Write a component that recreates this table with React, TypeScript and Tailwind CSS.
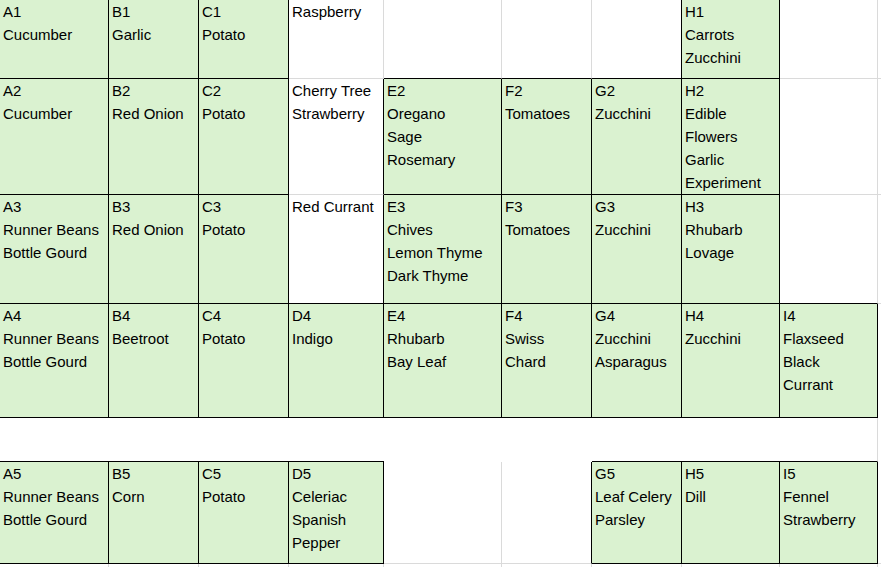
type Line = 'k' | 'g' | 'n';

interface Cell {
  lines?: string[];
  green?: boolean;
  r: Line;
  b: Line;
}

const rightCls: Record<Line, string> = {
  k: 'border-r border-r-black',
  g: 'border-r border-r-[#dadada]',
  n: '',
};

const bottomCls: Record<Line, string> = {
  k: 'border-b border-b-black',
  g: 'border-b border-b-[#dadada]',
  n: '',
};

// one entry per column A..I plus the sliver of J on the right
const rows: Cell[][] = [
  [
    { lines: ['A1', 'Cucumber'], green: true, r: 'k', b: 'k' },
    { lines: ['B1', 'Garlic'], green: true, r: 'k', b: 'k' },
    { lines: ['C1', 'Potato'], green: true, r: 'k', b: 'k' },
    { lines: ['Raspberry'], r: 'g', b: 'g' },
    { r: 'g', b: 'k' },
    { r: 'g', b: 'k' },
    { r: 'k', b: 'k' },
    { lines: ['H1', 'Carrots', 'Zucchini'], green: true, r: 'k', b: 'k' },
    { r: 'g', b: 'g' },
    { r: 'n', b: 'g' },
  ],
  [
    { lines: ['A2', 'Cucumber'], green: true, r: 'k', b: 'k' },
    { lines: ['B2', 'Red Onion'], green: true, r: 'k', b: 'k' },
    { lines: ['C2', 'Potato'], green: true, r: 'k', b: 'k' },
    { lines: ['Cherry Tree', 'Strawberry'], r: 'k', b: 'g' },
    { lines: ['E2', 'Oregano', 'Sage', 'Rosemary'], green: true, r: 'k', b: 'k' },
    { lines: ['F2', 'Tomatoes'], green: true, r: 'k', b: 'k' },
    { lines: ['G2', 'Zucchini'], green: true, r: 'k', b: 'k' },
    { lines: ['H2', 'Edible', 'Flowers', 'Garlic', 'Experiment'], green: true, r: 'k', b: 'k' },
    { r: 'g', b: 'g' },
    { r: 'n', b: 'g' },
  ],
  [
    { lines: ['A3', 'Runner Beans', 'Bottle Gourd'], green: true, r: 'k', b: 'k' },
    { lines: ['B3', 'Red Onion'], green: true, r: 'k', b: 'k' },
    { lines: ['C3', 'Potato'], green: true, r: 'k', b: 'k' },
    { lines: ['Red Currant'], r: 'k', b: 'k' },
    { lines: ['E3', 'Chives', 'Lemon Thyme', 'Dark Thyme'], green: true, r: 'k', b: 'k' },
    { lines: ['F3', 'Tomatoes'], green: true, r: 'k', b: 'k' },
    { lines: ['G3', 'Zucchini'], green: true, r: 'k', b: 'k' },
    { lines: ['H3', 'Rhubarb', 'Lovage'], green: true, r: 'k', b: 'k' },
    { r: 'g', b: 'k' },
    { r: 'n', b: 'g' },
  ],
  [
    { lines: ['A4', 'Runner Beans', 'Bottle Gourd'], green: true, r: 'k', b: 'k' },
    { lines: ['B4', 'Beetroot'], green: true, r: 'k', b: 'k' },
    { lines: ['C4', 'Potato'], green: true, r: 'k', b: 'k' },
    { lines: ['D4', 'Indigo'], green: true, r: 'k', b: 'k' },
    { lines: ['E4', 'Rhubarb', 'Bay Leaf'], green: true, r: 'k', b: 'k' },
    { lines: ['F4', 'Swiss', 'Chard'], green: true, r: 'k', b: 'k' },
    { lines: ['G4', 'Zucchini', 'Asparagus'], green: true, r: 'k', b: 'k' },
    { lines: ['H4', 'Zucchini'], green: true, r: 'k', b: 'k' },
    { lines: ['I4', 'Flaxseed', 'Black', 'Currant'], green: true, r: 'k', b: 'k' },
    { r: 'n', b: 'n' },
  ],
  // spacer row: merged, no inner gridlines
  [
    { r: 'n', b: 'k' },
    { r: 'n', b: 'k' },
    { r: 'n', b: 'k' },
    { r: 'n', b: 'k' },
    { r: 'n', b: 'n' },
    { r: 'n', b: 'n' },
    { r: 'n', b: 'k' },
    { r: 'n', b: 'k' },
    { r: 'g', b: 'k' },
    { r: 'n', b: 'n' },
  ],
  [
    { lines: ['A5', 'Runner Beans', 'Bottle Gourd'], green: true, r: 'k', b: 'k' },
    { lines: ['B5', 'Corn'], green: true, r: 'k', b: 'k' },
    { lines: ['C5', 'Potato'], green: true, r: 'k', b: 'k' },
    { lines: ['D5', 'Celeriac', 'Spanish', 'Pepper'], green: true, r: 'k', b: 'k' },
    { r: 'g', b: 'g' },
    { r: 'k', b: 'g' },
    { lines: ['G5', 'Leaf Celery', 'Parsley'], green: true, r: 'k', b: 'k' },
    { lines: ['H5', 'Dill'], green: true, r: 'k', b: 'k' },
    { lines: ['I5', 'Fennel', 'Strawberry'], green: true, r: 'k', b: 'k' },
    { r: 'n', b: 'g' },
  ],
  [
    { r: 'g', b: 'n' },
    { r: 'g', b: 'n' },
    { r: 'g', b: 'n' },
    { r: 'g', b: 'n' },
    { r: 'g', b: 'n' },
    { r: 'g', b: 'n' },
    { r: 'g', b: 'n' },
    { r: 'g', b: 'n' },
    { r: 'g', b: 'n' },
    { r: 'n', b: 'n' },
  ],
];

export default function App() {
  return (
    <div
      className="w-[881px] h-[567px] overflow-hidden bg-white text-black grid grid-cols-[109px_90px_90px_95px_118px_90px_90px_98px_98px_3px] grid-rows-[79px_116px_109px_114px_44px_102px_3px] text-[15px] leading-[23px]"
      style={{ fontFamily: '"Liberation Sans", Arial, sans-serif' }}
    >
      {rows.flatMap((row, ri) =>
        row.map((cell, ci) => (
          <div
            key={`${ri}-${ci}`}
            className={`pl-[3px] overflow-hidden whitespace-nowrap ${cell.green ? 'bg-[#daf2d0]' : 'bg-white'} ${rightCls[cell.r]} ${bottomCls[cell.b]}`}
          >
            {cell.lines?.map((line) => (
              <div key={line}>{line}</div>
            ))}
          </div>
        ))
      )}
    </div>
  );
}
